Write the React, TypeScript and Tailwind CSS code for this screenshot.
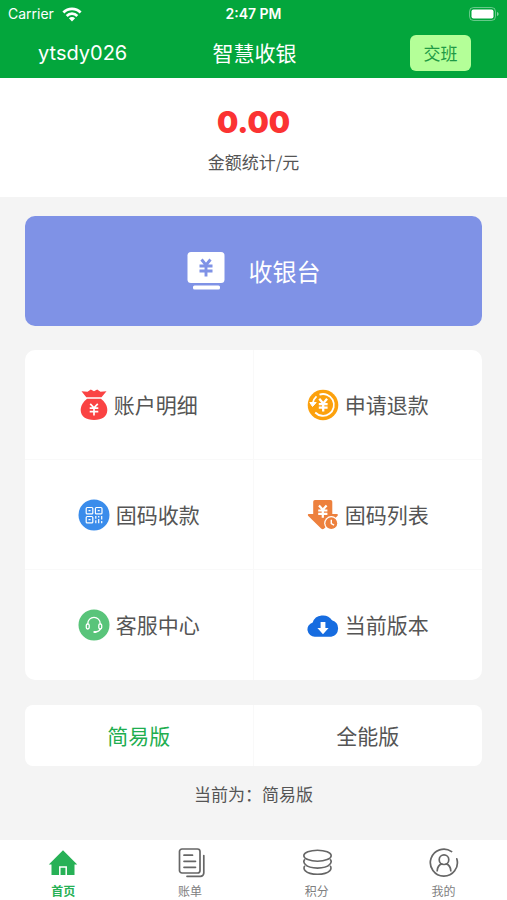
import React, { useState } from 'react';

function WifiIcon() {
  return (
    <svg viewBox="0 0 20 15" className="h-[15px] w-5" fill="none" stroke="#fff" strokeWidth="2.8" aria-hidden="true">
      <path d="M1.4 5.4a12.2 12.2 0 0 1 17.2 0" />
      <path d="M4.7 8.9a7.5 7.5 0 0 1 10.6 0" />
      <path d="M10 14.4 6.9 11.2a4.4 4.4 0 0 1 6.2 0Z" fill="#fff" stroke="none" />
    </svg>
  );
}

function BatteryIcon() {
  return (
    <svg viewBox="0 0 30 14" className="h-[14px] w-[30px]" aria-hidden="true">
      <rect x="0.5" y="0.5" width="26" height="13" rx="4" fill="none" stroke="#fff" strokeOpacity="0.4" />
      <rect x="2.5" y="2.5" width="22" height="9" rx="2" fill="#fff" />
      <path d="M28 5v4c1-.3 1.6-1.1 1.6-2S29 5.3 28 5Z" fill="#fff" fillOpacity="0.5" />
    </svg>
  );
}

function RegisterIcon() {
  return (
    <svg viewBox="0 0 38 38" className="size-[38px]" aria-hidden="true">
      <rect x="0.5" y="0" width="37" height="31" rx="3.5" fill="#fff" />
      <rect x="6" y="33.5" width="27" height="4" rx="1.5" fill="#fff" />
      <path d="m14.5 7.5 4.500 5.500 4.500-5.500M12.500 14h13M12.500 19h13M19 13v11.500" fill="none" stroke="#7f92e6" strokeWidth="2.9" />
    </svg>
  );
}

function BagIcon() {
  return (
    <svg viewBox="0 0 28 32" className="h-8 w-7" aria-hidden="true">
      <path d="M1.500 2.200 7.500 2.800 10.800.6 14 2.200 17.200.6 20.500 2.800 26.500 2.200 21.500 8.300H6.300Z" fill="#fa4343" strokeLinejoin="round" />
      <path d="M7 9.700h14c3.600 2.900 6.300 6.900 6.300 11.300 0 6.500-5.300 10-13.300 10S.7 27.500.7 21C.7 16.600 3.400 12.600 7 9.700Z" fill="#fa4343" />
      <path d="m10.200 14.800 3.800 4 3.800-4M9.700 19.200h8.600M9.700 22.600h8.600M14 19v7.500" fill="none" stroke="#fff" strokeWidth="1.7" />
    </svg>
  );
}

function RefundIcon() {
  return (
    <svg viewBox="0 0 32 32" className="size-8" aria-hidden="true">
      <circle cx="16" cy="16" r="15.3" fill="#fca10d" />
      <path d="M6 13.500A10.900 10.900 0 0 1 9.500 7.300M12.500 5.600A10.900 10.900 0 1 1 8.200 23.500" fill="none" stroke="#fff" strokeWidth="1.800" />
      <path d="m2.800 13.500 6.400 0L5.500 17.500Z" fill="#fff" stroke="#fff" strokeLinejoin="round" />
      <path d="m12.300 9.800 3.900 4.700 3.900-4.700M11.800 15.200h8.800M11.800 18.700h8.800M16.200 14.500v8" fill="none" stroke="#fff" strokeWidth="2.3" />
    </svg>
  );
}

function QrIcon() {
  return (
    <svg viewBox="0 0 32 32" className="size-8" fill="none" stroke="#fff" strokeWidth="1.2" aria-hidden="true">
      <circle cx="16" cy="16" r="15.5" fill="#3a8ceb" stroke="none" />
      <rect x="8.200" y="8.500" width="6.600" height="6.400" rx="1" />
      <rect x="17.400" y="8.500" width="6.600" height="6.400" rx="1" />
      <rect x="8.200" y="17.500" width="6.600" height="6.400" rx="1" />
      <path d="M10.500 11.700h2M19.700 11.700h2M10.500 20.700h2M17.800 17v2.800M17.800 21.300v3M20.700 17v1.500M20.700 20v4.300M23.700 17v3.500M23.700 22v2.300" />
    </svg>
  );
}

function CodeListIcon() {
  return (
    <svg viewBox="0 0 32 32" className="size-8" aria-hidden="true">
      <path d="M8 1h15.500A1.800 1.800 0 0 1 25.300 2.800V15h4.400c1.200 0 1.500 1 .7 1.900L17.200 29.600c-1 1-2.100 1-3.100 0L1.300 16.900C.5 16 .8 15 2 15h4.200V2.800A1.800 1.800 0 0 1 8 1Z" fill="#ed803d" />
      <circle cx="24.300" cy="24.200" r="7.100" fill="#fff" />
      <circle cx="24.300" cy="24.200" r="5.900" fill="#ed803d" />
      <path d="M24.300 20.800v3.800l2.800 1.500" fill="none" stroke="#fff" strokeWidth="1.4" />
      <path d="m12 6.500 3.800 4.300 3.800-4.300M11.200 11.500h9.200M11.200 14.800h9.200M15.800 11v7.800" fill="none" stroke="#fff" strokeWidth="2.2" />
    </svg>
  );
}

function SupportIcon() {
  return (
    <svg viewBox="0 0 32 32" className="size-8" aria-hidden="true">
      <circle cx="16" cy="16" r="15.5" fill="#59c47a" />
      <g fill="none" stroke="#fff" strokeWidth="1.3" strokeLinecap="round">
        <path d="M9.800 15.200v-.7a6.200 6.200 0 0 1 12.400 0v.7" />
        <rect x="8.300" y="14.800" width="2.900" height="5.200" rx="1.400" />
        <rect x="20.800" y="14.800" width="2.900" height="5.200" rx="1.400" />
        <path d="M22.300 20c-.6 1.700-2.200 2.700-4.800 2.900" />
      </g>
      <rect x="15.300" y="21.900" width="3.400" height="2" rx="1" fill="#fff" />
    </svg>
  );
}

function CloudIcon() {
  return (
    <svg viewBox="0 0 32 32" className="size-8" aria-hidden="true">
      <path d="M8 27.700A7.300 7.300 0 0 1 5.700 13.400 10.600 9.700 0 0 1 25 11.200 8.500 8.500 0 0 1 24.200 27.700Z" fill="#166ce0" />
      <path d="M13.600 13h4.800v6h3.200L16 25.200 10.400 19h3.200Z" fill="#fff" />
    </svg>
  );
}

function HomeIcon() {
  return (
    <svg viewBox="0 0 32 32" className="size-8" aria-hidden="true">
      <path d="M16 3.200 30.200 17.500H27.500V28H4.500V17.500H1.800Z" fill="#27b156" />
      <path d="M12.800 28v-8h6.400v8" fill="none" stroke="#fff" strokeWidth="1.5" />
      <path d="M14.500 21.500h3V28h-3Z" fill="#27b156" />
    </svg>
  );
}

function BillIcon() {
  return (
    <svg viewBox="0 0 32 32" className="size-8" fill="none" stroke="#666" strokeWidth="1.7" strokeLinecap="round" strokeLinejoin="round" aria-hidden="true">
      <rect x="5.500" y="2" width="20.500" height="24" rx="2.500" />
      <path d="M10 8.200h8.500M10 14.300h11.500M10 20.300h11.500M29.800 8.500v17.500a3.300 3.300 0 0 1-3.300 3.300H13" />
    </svg>
  );
}

function PointsIcon() {
  return (
    <svg viewBox="0 0 32 32" className="size-8" fill="none" stroke="#666" strokeWidth="1.6" aria-hidden="true">
      <ellipse cx="16.500" cy="8.700" rx="13.700" ry="5.500" />
      <path d="M3.900 12.300C1.500 14.600 3.300 21.100 16.500 21.100s15-6.500 12.600-8.800M3.900 18.800C1.500 21.100 3.300 27.300 16.500 27.300s15-6.200 12.600-8.500" />
    </svg>
  );
}

function ProfileIcon() {
  return (
    <svg viewBox="0 0 32 32" className="size-8" fill="none" stroke="#666" strokeWidth="1.7" strokeLinecap="round" aria-hidden="true">
      <path d="M23.600 4.600A13.500 13.500 0 1 0 28.800 11.800" />
      <circle cx="16" cy="12.700" r="4.800" />
      <path d="M9.200 23.800c.2-3.600 2-6 4.600-6.900M18.200 16.900c2.600.9 4.400 3.300 4.600 6.900" />
    </svg>
  );
}

const actions = [
  { label: '账户明细', Icon: BagIcon },
  { label: '申请退款', Icon: RefundIcon },
  { label: '固码收款', Icon: QrIcon },
  { label: '固码列表', Icon: CodeListIcon },
  { label: '客服中心', Icon: SupportIcon },
  { label: '当前版本', Icon: CloudIcon },
];

const editions = ['简易版', '全能版'];

const navItems = [
  { label: '首页', Icon: HomeIcon, active: true },
  { label: '账单', Icon: BillIcon, active: false },
  { label: '积分', Icon: PointsIcon, active: false },
  { label: '我的', Icon: ProfileIcon, active: false },
];

export default function App() {
  const [edition, setEdition] = useState('简易版');

  return (
    <div className="flex min-h-screen flex-col bg-[#f4f4f4] font-['Noto_Sans_CJK_SC',sans-serif] text-[#555]">
      <header className="bg-[#03a63c] text-white">
        <div className="grid h-7 grid-cols-3 items-center px-2 font-['Inter',sans-serif] text-sm">
          <div className="flex items-center gap-2">
            <span>Carrier</span>
            <WifiIcon />
          </div>
          <time className="text-center font-semibold">2:47 PM</time>
          <div className="flex justify-end">
            <BatteryIcon />
          </div>
        </div>
        <div className="grid h-[50px] grid-cols-3 items-center pr-9 pl-[38px]">
          <span className="font-['Inter',sans-serif] text-xl">ytsdy026</span>
          <h1 className="text-center text-[21px]">智慧收银</h1>
          <button type="button" className="h-9 w-[61px] justify-self-end rounded-md bg-[#b4ff98] text-[17px] text-[#1f9a45]">
            交班
          </button>
        </div>
      </header>

      <section className="flex h-[119px] flex-col items-center bg-white pt-6">
        <p className="font-['Inter',sans-serif] text-[30px] leading-10 font-black text-[#fb3333]">0.00</p>
        <p className="mt-2 text-[17px] leading-6">金额统计/元</p>
      </section>

      <main className="flex flex-1 flex-col px-[25px] pt-[19px]">
        <button type="button" className="flex h-[110px] items-center justify-center gap-6 rounded-[10px] bg-[#7f92e6] text-2xl text-white">
          <RegisterIcon />
          收银台
        </button>

        <div className="mt-6 grid grid-cols-2 overflow-hidden rounded-[10px] bg-white">
          {actions.map(({ label, Icon }) => (
            <button
              key={label}
              type="button"
              className="flex h-[110px] items-center justify-center gap-1.5 border-[#f9f9f9] text-[21px] odd:border-r [&:nth-child(-n+4)]:border-b"
            >
              <Icon />
              {label}
            </button>
          ))}
        </div>

        <div className="mt-[25px] grid grid-cols-2 overflow-hidden rounded-lg bg-white">
          {editions.map((name) => (
            <button
              key={name}
              type="button"
              aria-pressed={edition === name}
              onClick={() => setEdition(name)}
              className={`h-[61px] border-[#f9f9f9] text-[21px] odd:border-r ${edition === name ? 'text-[#1fae50]' : ''}`}
            >
              {name}
            </button>
          ))}
        </div>
        <p className="mt-4 text-center text-[17px] leading-6">当前为：{edition}</p>
      </main>

      <nav className="grid h-[60px] grid-cols-4 bg-white text-xs">
        {navItems.map(({ label, Icon, active }) => (
          <a
            key={label}
            href="#"
            aria-current={active ? 'page' : undefined}
            className={`flex flex-col items-center pt-[7px] ${active ? 'font-bold text-[#27b156]' : 'text-[#808080]'}`}
          >
            <Icon />
            <span className="mt-1 leading-4">{label}</span>
          </a>
        ))}
      </nav>
    </div>
  );
}
